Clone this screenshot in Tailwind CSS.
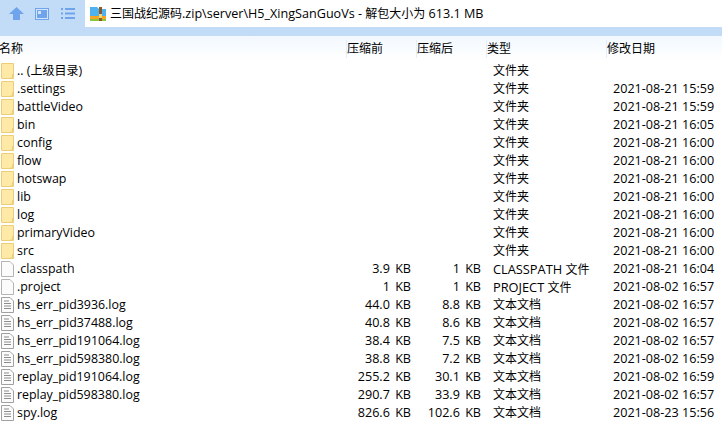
<!DOCTYPE html>
<html><head><meta charset="utf-8"><script src="https://cdn.jsdelivr.net/npm/@tailwindcss/browser@4"></script></head>
<body class="w-[722px] h-[429px] overflow-hidden bg-white text-[12px] leading-[18px] text-black font-['Open_Sans','Noto_Sans_CJK_SC',sans-serif]">
<header class="h-[27px] flex bg-[#c2dcf8]">
  <div class="w-[85px] flex items-center">
    <svg class="ml-[9px]" width="15" height="13" viewBox="0 0 15 13"><path d="M7.500 0L15 7H11V13H4V7H0Z" fill="#6fa3ec"/></svg>
    <svg class="ml-[11px]" width="14" height="12" viewBox="0 0 14 12"><rect x=".5" y=".5" width="13" height="11" fill="#d3e5fa" stroke="#6fa3ec"/><rect x="2" y="2" width="10" height="8" fill="#6fa3ec"/><rect x="3" y="3" width="3" height="3" fill="#d3e5fa"/></svg>
    <svg class="ml-[12px]" width="14" height="11" viewBox="0 0 14 11" fill="#6fa3ec"><rect width="2" height="2"/><rect x="4" width="10" height="2"/><rect y="4.500" width="2" height="2"/><rect x="4" y="4.500" width="10" height="2"/><rect y="9" width="2" height="2"/><rect x="4" y="9" width="10" height="2"/></svg>
  </div>
  <div class="flex-1 bg-white flex items-center pl-[5px]">
    <svg class="shrink-0" width="16" height="15" viewBox="0 0 16 15"><path d="M0 1H7L9 3H16V11H0Z" fill="#4db2ee"/><rect y="10" width="16" height="3" fill="#f5a623"/><rect y="13" width="16" height="2" fill="#8cc63f"/><rect x="9" y="1" width="3" height="14" fill="#8a5a2b"/><rect x="9" y="8" width="3" height="4" fill="#f7d774"/></svg>
    <span class="ml-[4px] text-[12.6px] whitespace-nowrap"><span class="text-[12px]">三国战纪源码</span>.zip\server\H5_XingSanGuoVs - <span class="text-[12px]">解包大小为</span> 613.1 MB</span>
  </div>
</header>
<div class="h-[9px] bg-[#c2dcf8]"></div>
<div class="h-[24px] pt-[2px] grid grid-cols-[347px_70px_70px_120px_1fr] items-center bg-gradient-to-b from-[#f2f8ff] to-white">
  <span class="-ml-px">名称</span>
  <span class="border-l border-[#e4eefa] -ml-px">压缩前</span>
  <span class="border-l border-[#e4eefa] -ml-px">压缩后</span>
  <span class="border-l border-[#e4eefa] -ml-px">类型</span>
  <span class="border-l border-[#e4eefa] -ml-px">修改日期</span>
</div>
<main class="pt-[2px]">
<div class="h-[18px] flex items-center"><svg class="ml-[1px] mr-[3px]" width="13" height="16" viewBox="0 0 13 16"><path d="M.5.5H12.500V15.500H.5Z" fill="#ffe9a6" stroke="#eccd78"/><path d="M11.500 11V15H9" fill="none" stroke="#eccd78"/></svg><span class="w-[330px] text-[12.4px]">.. (<span class="text-[12px]">上级目录</span>)</span><span class="w-[64px]"></span><span class="w-[70px]"></span><span class="ml-[12px] w-[120px]">文件夹</span></div>
<div class="h-[18px] flex items-center"><svg class="ml-[1px] mr-[3px]" width="13" height="16" viewBox="0 0 13 16"><path d="M.5.5H12.500V15.500H.5Z" fill="#ffe9a6" stroke="#eccd78"/><path d="M11.500 11V15H9" fill="none" stroke="#eccd78"/></svg><span class="w-[330px] text-[12.4px]">.settings</span><span class="w-[64px]"></span><span class="w-[70px]"></span><span class="ml-[12px] w-[120px]">文件夹</span><span class="text-[12.6px]">2021-08-21 15:59</span></div>
<div class="h-[18px] flex items-center"><svg class="ml-[1px] mr-[3px]" width="13" height="16" viewBox="0 0 13 16"><path d="M.5.5H12.500V15.500H.5Z" fill="#ffe9a6" stroke="#eccd78"/><path d="M11.500 11V15H9" fill="none" stroke="#eccd78"/></svg><span class="w-[330px] text-[12.4px]">battleVideo</span><span class="w-[64px]"></span><span class="w-[70px]"></span><span class="ml-[12px] w-[120px]">文件夹</span><span class="text-[12.6px]">2021-08-21 15:59</span></div>
<div class="h-[18px] flex items-center"><svg class="ml-[1px] mr-[3px]" width="13" height="16" viewBox="0 0 13 16"><path d="M.5.5H12.500V15.500H.5Z" fill="#ffe9a6" stroke="#eccd78"/><path d="M11.500 11V15H9" fill="none" stroke="#eccd78"/></svg><span class="w-[330px] text-[12.4px]">bin</span><span class="w-[64px]"></span><span class="w-[70px]"></span><span class="ml-[12px] w-[120px]">文件夹</span><span class="text-[12.6px]">2021-08-21 16:05</span></div>
<div class="h-[18px] flex items-center"><svg class="ml-[1px] mr-[3px]" width="13" height="16" viewBox="0 0 13 16"><path d="M.5.5H12.500V15.500H.5Z" fill="#ffe9a6" stroke="#eccd78"/><path d="M11.500 11V15H9" fill="none" stroke="#eccd78"/></svg><span class="w-[330px] text-[12.4px]">config</span><span class="w-[64px]"></span><span class="w-[70px]"></span><span class="ml-[12px] w-[120px]">文件夹</span><span class="text-[12.6px]">2021-08-21 16:00</span></div>
<div class="h-[18px] flex items-center"><svg class="ml-[1px] mr-[3px]" width="13" height="16" viewBox="0 0 13 16"><path d="M.5.5H12.500V15.500H.5Z" fill="#ffe9a6" stroke="#eccd78"/><path d="M11.500 11V15H9" fill="none" stroke="#eccd78"/></svg><span class="w-[330px] text-[12.4px]">flow</span><span class="w-[64px]"></span><span class="w-[70px]"></span><span class="ml-[12px] w-[120px]">文件夹</span><span class="text-[12.6px]">2021-08-21 16:00</span></div>
<div class="h-[18px] flex items-center"><svg class="ml-[1px] mr-[3px]" width="13" height="16" viewBox="0 0 13 16"><path d="M.5.5H12.500V15.500H.5Z" fill="#ffe9a6" stroke="#eccd78"/><path d="M11.500 11V15H9" fill="none" stroke="#eccd78"/></svg><span class="w-[330px] text-[12.4px]">hotswap</span><span class="w-[64px]"></span><span class="w-[70px]"></span><span class="ml-[12px] w-[120px]">文件夹</span><span class="text-[12.6px]">2021-08-21 16:00</span></div>
<div class="h-[18px] flex items-center"><svg class="ml-[1px] mr-[3px]" width="13" height="16" viewBox="0 0 13 16"><path d="M.5.5H12.500V15.500H.5Z" fill="#ffe9a6" stroke="#eccd78"/><path d="M11.500 11V15H9" fill="none" stroke="#eccd78"/></svg><span class="w-[330px] text-[12.4px]">lib</span><span class="w-[64px]"></span><span class="w-[70px]"></span><span class="ml-[12px] w-[120px]">文件夹</span><span class="text-[12.6px]">2021-08-21 16:00</span></div>
<div class="h-[18px] flex items-center"><svg class="ml-[1px] mr-[3px]" width="13" height="16" viewBox="0 0 13 16"><path d="M.5.5H12.500V15.500H.5Z" fill="#ffe9a6" stroke="#eccd78"/><path d="M11.500 11V15H9" fill="none" stroke="#eccd78"/></svg><span class="w-[330px] text-[12.4px]">log</span><span class="w-[64px]"></span><span class="w-[70px]"></span><span class="ml-[12px] w-[120px]">文件夹</span><span class="text-[12.6px]">2021-08-21 16:00</span></div>
<div class="h-[18px] flex items-center"><svg class="ml-[1px] mr-[3px]" width="13" height="16" viewBox="0 0 13 16"><path d="M.5.5H12.500V15.500H.5Z" fill="#ffe9a6" stroke="#eccd78"/><path d="M11.500 11V15H9" fill="none" stroke="#eccd78"/></svg><span class="w-[330px] text-[12.4px]">primaryVideo</span><span class="w-[64px]"></span><span class="w-[70px]"></span><span class="ml-[12px] w-[120px]">文件夹</span><span class="text-[12.6px]">2021-08-21 16:00</span></div>
<div class="h-[18px] flex items-center"><svg class="ml-[1px] mr-[3px]" width="13" height="16" viewBox="0 0 13 16"><path d="M.5.5H12.500V15.500H.5Z" fill="#ffe9a6" stroke="#eccd78"/><path d="M11.500 11V15H9" fill="none" stroke="#eccd78"/></svg><span class="w-[330px] text-[12.4px]">src</span><span class="w-[64px]"></span><span class="w-[70px]"></span><span class="ml-[12px] w-[120px]">文件夹</span><span class="text-[12.6px]">2021-08-21 16:00</span></div>
<div class="h-[18px] flex items-center"><svg class="ml-[1px] mr-[3px]" width="13" height="16" viewBox="0 0 13 16"><path d="M.5.5H9L12.500 4V15.500H.5Z" fill="#fbfbfb" stroke="#b4b4b4"/></svg><span class="w-[330px] text-[12.4px]">.classpath</span><span class="w-[64px] text-right text-[12.6px] [word-spacing:2px]">3.9 KB</span><span class="w-[70px] text-right text-[12.6px] [word-spacing:2px]">1 KB</span><span class="ml-[12px] w-[120px] text-[12.8px]">CLASSPATH <span class="text-[12px]">文件</span></span><span class="text-[12.6px]">2021-08-21 16:04</span></div>
<div class="h-[18px] flex items-center"><svg class="ml-[1px] mr-[3px]" width="13" height="16" viewBox="0 0 13 16"><path d="M.5.5H9L12.500 4V15.500H.5Z" fill="#fbfbfb" stroke="#b4b4b4"/></svg><span class="w-[330px] text-[12.4px]">.project</span><span class="w-[64px] text-right text-[12.6px] [word-spacing:2px]">1 KB</span><span class="w-[70px] text-right text-[12.6px] [word-spacing:2px]">1 KB</span><span class="ml-[12px] w-[120px] text-[12.8px]">PROJECT <span class="text-[12px]">文件</span></span><span class="text-[12.6px]">2021-08-02 16:57</span></div>
<div class="h-[18px] flex items-center"><svg class="ml-[1px] mr-[3px]" width="13" height="16" viewBox="0 0 13 16"><path d="M.5.5H9L12.500 4V15.500H.5Z" fill="#fbfbfb" stroke="#a0a0a0"/><path d="M3 4H8M3 6.500H10M3 9H10M3 11.500H10" stroke="#8c8c8c"/></svg><span class="w-[330px] text-[12.4px]">hs_err_pid3936.log</span><span class="w-[64px] text-right text-[12.6px] [word-spacing:2px]">44.0 KB</span><span class="w-[70px] text-right text-[12.6px] [word-spacing:2px]">8.8 KB</span><span class="ml-[12px] w-[120px]">文本文档</span><span class="text-[12.6px]">2021-08-02 16:57</span></div>
<div class="h-[18px] flex items-center"><svg class="ml-[1px] mr-[3px]" width="13" height="16" viewBox="0 0 13 16"><path d="M.5.5H9L12.500 4V15.500H.5Z" fill="#fbfbfb" stroke="#a0a0a0"/><path d="M3 4H8M3 6.500H10M3 9H10M3 11.500H10" stroke="#8c8c8c"/></svg><span class="w-[330px] text-[12.4px]">hs_err_pid37488.log</span><span class="w-[64px] text-right text-[12.6px] [word-spacing:2px]">40.8 KB</span><span class="w-[70px] text-right text-[12.6px] [word-spacing:2px]">8.6 KB</span><span class="ml-[12px] w-[120px]">文本文档</span><span class="text-[12.6px]">2021-08-02 16:57</span></div>
<div class="h-[18px] flex items-center"><svg class="ml-[1px] mr-[3px]" width="13" height="16" viewBox="0 0 13 16"><path d="M.5.5H9L12.500 4V15.500H.5Z" fill="#fbfbfb" stroke="#a0a0a0"/><path d="M3 4H8M3 6.500H10M3 9H10M3 11.500H10" stroke="#8c8c8c"/></svg><span class="w-[330px] text-[12.4px]">hs_err_pid191064.log</span><span class="w-[64px] text-right text-[12.6px] [word-spacing:2px]">38.4 KB</span><span class="w-[70px] text-right text-[12.6px] [word-spacing:2px]">7.5 KB</span><span class="ml-[12px] w-[120px]">文本文档</span><span class="text-[12.6px]">2021-08-02 16:57</span></div>
<div class="h-[18px] flex items-center"><svg class="ml-[1px] mr-[3px]" width="13" height="16" viewBox="0 0 13 16"><path d="M.5.5H9L12.500 4V15.500H.5Z" fill="#fbfbfb" stroke="#a0a0a0"/><path d="M3 4H8M3 6.500H10M3 9H10M3 11.500H10" stroke="#8c8c8c"/></svg><span class="w-[330px] text-[12.4px]">hs_err_pid598380.log</span><span class="w-[64px] text-right text-[12.6px] [word-spacing:2px]">38.8 KB</span><span class="w-[70px] text-right text-[12.6px] [word-spacing:2px]">7.2 KB</span><span class="ml-[12px] w-[120px]">文本文档</span><span class="text-[12.6px]">2021-08-02 16:59</span></div>
<div class="h-[18px] flex items-center"><svg class="ml-[1px] mr-[3px]" width="13" height="16" viewBox="0 0 13 16"><path d="M.5.5H9L12.500 4V15.500H.5Z" fill="#fbfbfb" stroke="#a0a0a0"/><path d="M3 4H8M3 6.500H10M3 9H10M3 11.500H10" stroke="#8c8c8c"/></svg><span class="w-[330px] text-[12.4px]">replay_pid191064.log</span><span class="w-[64px] text-right text-[12.6px] [word-spacing:2px]">255.2 KB</span><span class="w-[70px] text-right text-[12.6px] [word-spacing:2px]">30.1 KB</span><span class="ml-[12px] w-[120px]">文本文档</span><span class="text-[12.6px]">2021-08-02 16:59</span></div>
<div class="h-[18px] flex items-center"><svg class="ml-[1px] mr-[3px]" width="13" height="16" viewBox="0 0 13 16"><path d="M.5.5H9L12.500 4V15.500H.5Z" fill="#fbfbfb" stroke="#a0a0a0"/><path d="M3 4H8M3 6.500H10M3 9H10M3 11.500H10" stroke="#8c8c8c"/></svg><span class="w-[330px] text-[12.4px]">replay_pid598380.log</span><span class="w-[64px] text-right text-[12.6px] [word-spacing:2px]">290.7 KB</span><span class="w-[70px] text-right text-[12.6px] [word-spacing:2px]">33.9 KB</span><span class="ml-[12px] w-[120px]">文本文档</span><span class="text-[12.6px]">2021-08-02 16:57</span></div>
<div class="h-[18px] flex items-center"><svg class="ml-[1px] mr-[3px]" width="13" height="16" viewBox="0 0 13 16"><path d="M.5.5H9L12.500 4V15.500H.5Z" fill="#fbfbfb" stroke="#a0a0a0"/><path d="M3 4H8M3 6.500H10M3 9H10M3 11.500H10" stroke="#8c8c8c"/></svg><span class="w-[330px] text-[12.4px]">spy.log</span><span class="w-[64px] text-right text-[12.6px] [word-spacing:2px]">826.6 KB</span><span class="w-[70px] text-right text-[12.6px] [word-spacing:2px]">102.6 KB</span><span class="ml-[12px] w-[120px]">文本文档</span><span class="text-[12.6px]">2021-08-23 15:56</span></div>
</main>
</body></html>
